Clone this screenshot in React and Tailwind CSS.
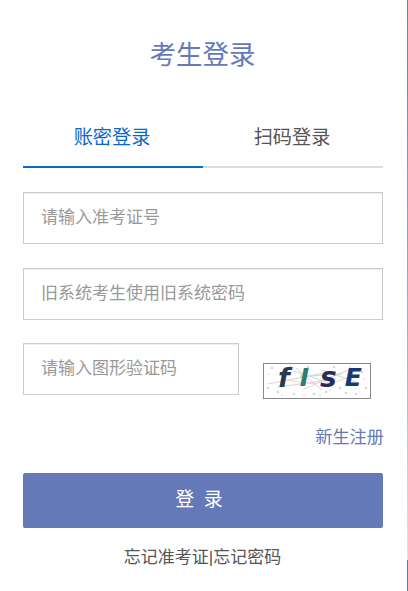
const FONT = "font-['Liberation_Sans','Noto_Sans_CJK_SC',sans-serif]";

function Captcha() {
  return (
    <div className="relative flex h-[36px] w-[108px] items-center border border-[#8a8a8a] bg-white pb-[6px] pl-[14px] font-['DejaVu_Sans',sans-serif] leading-[26px] font-bold italic">
      <svg className="absolute inset-0" width="106" height="34" viewBox="0 0 106 34">
        <path d="M4 20 L60 9 M14 23 L72 15 M32 4 L58 26 M40 25 L84 6" stroke="#e2c9e8" strokeWidth="1" fill="none" />
        <path d="M30 7 L68 20 M46 12 L78 10 M58 6 L92 18" stroke="#b9e4d2" strokeWidth="1" fill="none" />
        <path d="M20 16 L52 20 M60 22 L88 12" stroke="#f3d6c8" strokeWidth="1" fill="none" />
        <g fill="#8f7d9e">
          <circle cx="8" cy="4" r="0.7" /><circle cx="14" cy="28" r="0.7" /><circle cx="22" cy="6" r="0.7" />
          <circle cx="30" cy="30" r="0.7" /><circle cx="44" cy="3" r="0.7" /><circle cx="50" cy="30" r="0.7" />
          <circle cx="62" cy="28" r="0.7" /><circle cx="70" cy="3" r="0.7" /><circle cx="82" cy="29" r="0.7" />
          <circle cx="98" cy="8" r="0.7" /><circle cx="102" cy="24" r="0.7" /><circle cx="4" cy="24" r="0.7" />
          <circle cx="92" cy="30" r="0.7" /><circle cx="76" cy="24" r="0.7" /><circle cx="37" cy="12" r="0.7" />
        </g>
        <g fill="#d98aa8">
          <circle cx="5" cy="10" r="0.6" /><circle cx="18" cy="31" r="0.6" /><circle cx="26" cy="2" r="0.6" />
          <circle cx="40" cy="31" r="0.6" /><circle cx="56" cy="31" r="0.6" /><circle cx="66" cy="26" r="0.6" />
          <circle cx="86" cy="3" r="0.6" /><circle cx="100" cy="15" r="0.6" /><circle cx="96" cy="28" r="0.6" />
        </g>
      </svg>
      <span className="relative text-[27px] text-[#243a4e]">f</span>
      <span className="relative ml-[10px] text-[25px] text-[#2a7f6c]">I</span>
      <span className="relative ml-[11px] text-[28px] text-[#262a5c]">s</span>
      <span className="relative ml-[8px] text-[25px] text-[#163a78]">E</span>
    </div>
  );
}

function Field({ placeholder, className }) {
  return (
    <input
      readOnly
      placeholder={placeholder}
      className={`block h-[52px] border border-[#cccccc] bg-white pl-[17px] text-[17px] text-[#555555] shadow-[inset_0_1px_1px_rgba(0,0,0,0.075)] outline-none placeholder:text-[#999999] ${className}`}
    />
  );
}

export default function App() {
  return (
    <div className={`relative h-[591px] w-[408px] overflow-hidden bg-white ${FONT}`}>
      <div className="h-full w-[407px] px-[23px]">
        <h1 className="pt-[38px] pr-[2px] text-center text-[26.4px] leading-[34px] font-normal text-[#6579b8]">考生登录</h1>
        <div className="mt-[50px] flex h-[46px] w-[360px] border-b-2 border-[#dddddd]">
          <div className="h-[46px] w-[180px] border-b-2 border-[#0a68c8] pr-[2px] text-center text-[19.2px] leading-[32px] text-[#0a68c8]">账密登录</div>
          <div className="w-[180px] pr-[2px] text-center text-[19.2px] leading-[32px] text-[#555555]">扫码登录</div>
        </div>
        <Field placeholder="请输入准考证号" className="mt-[24px] w-[360px]" />
        <Field placeholder="旧系统考生使用旧系统密码" className="mt-[24px] w-[360px]" />
        <div className="mt-[23px] flex items-start">
          <Field placeholder="请输入图形验证码" className="w-[216px]" />
          <div className="mt-[20px] ml-[24px]"><Captcha /></div>
        </div>
        <div className="mt-[26px] text-right text-[17.2px] leading-[24px] text-[#6579b8]">新生注册</div>
        <button className="mt-[24px] block h-[55px] w-[360px] rounded-[2px] bg-[#6579b8] pr-[6px] text-center text-[19px] tracking-[2px] text-white">登 录</button>
        <div className="mt-[18px] pr-[2px] text-center text-[17px] leading-[24px] text-[#555555]">忘记准考证|忘记密码</div>
      </div>
      <div className="absolute top-0 right-0 flex h-full w-px flex-col">
        <div className="h-[560px] bg-linear-to-b from-[#6f7fa0] via-[#a9aeb8] via-60% to-[#e4e4e4]" />
        <div className="flex-1 bg-[#6579b8]" />
      </div>
    </div>
  );
}
